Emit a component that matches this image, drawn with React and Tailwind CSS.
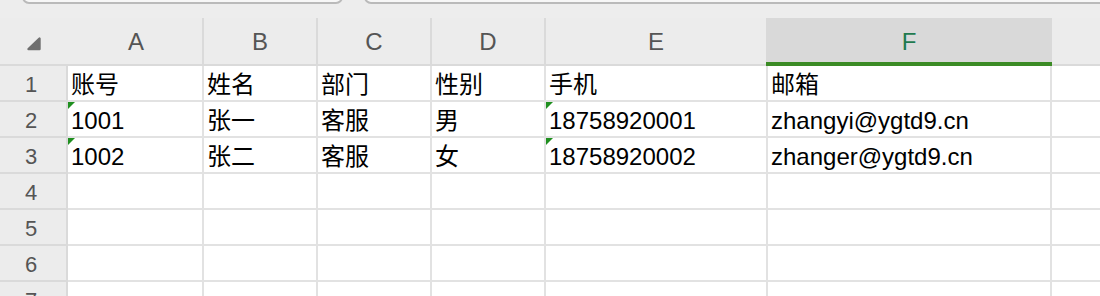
import React from "react";

const rows = [
  { n: "1", c: ["账号", "姓名", "部门", "性别", "手机", "邮箱"], f: false },
  { n: "2", c: ["1001", "张一", "客服", "男", "18758920001", "zhangyi@ygtd9.cn"], f: true },
  { n: "3", c: ["1002", "张二", "客服", "女", "18758920002", "zhanger@ygtd9.cn"], f: true },
  { n: "4", c: ["", "", "", "", "", ""], f: false },
  { n: "5", c: ["", "", "", "", "", ""], f: false },
  { n: "6", c: ["", "", "", "", "", ""], f: false },
  { n: "7", c: ["", "", "", "", "", ""], f: false },
];

const widths = ["w-[136px]", "w-[114px]", "w-[114px]", "w-[114px]", "w-[222px]", "w-[284px]"];

function Flag() {
  return (
    <span className="absolute left-0 top-0 w-0 h-0 border-t-[7px] border-r-[7px] border-t-[#1f8f1f] border-r-transparent" />
  );
}

export default function App() {
  return (
    <div className="w-[1100px] h-[296px] overflow-hidden bg-[#ededed] font-['Liberation_Sans','Noto_Sans_CJK_SC',sans-serif]">
      {/* top toolbar remnants */}
      <div className="h-[18px] flex items-start pl-[22px] gap-[21px] overflow-hidden">
        <div className="w-[321px] h-[14px] -mt-[10px] shrink-0 border-2 border-[#bababa] rounded-[7px] bg-[#f7f7f7]" />
        <div className="w-[760px] h-[14px] -mt-[10px] shrink-0 border-2 border-[#bababa] rounded-[7px] bg-[#f7f7f7]" />
      </div>

      {/* column header */}
      <div className="flex h-[48px] bg-[#ececec] text-[24px] text-[#555555]">
        <div className="w-[68px] h-[48px] border-b-2 border-[#dadada] flex items-start pl-[26px] pt-[18px]">
          <svg width="16" height="15" viewBox="0 0 16 15">
            <path d="M2.5 13 L13.5 2.5 L13.5 13 Z" fill="#6f6f6f" stroke="#6f6f6f" strokeWidth="2.4" strokeLinejoin="round" />
          </svg>
        </div>
        <div className="w-[136px] h-[48px] border-r-2 border-b-2 border-[#dadada] flex items-center justify-center pl-[2px] pt-[1px]">A</div>
        <div className="w-[114px] h-[48px] border-r-2 border-b-2 border-[#dadada] flex items-center justify-center pt-[1px]">B</div>
        <div className="w-[114px] h-[48px] border-r-2 border-b-2 border-[#dadada] flex items-center justify-center pt-[1px]">C</div>
        <div className="w-[114px] h-[48px] border-r-2 border-b-2 border-[#dadada] flex items-center justify-center pt-[1px]">D</div>
        <div className="w-[220px] h-[48px] border-b-2 border-[#dadada] flex items-center justify-center pt-[1px]">E</div>
        <div className="w-[286px] h-[48px] bg-[#d9d9d9] border-b-4 border-[#3b8b25] flex items-center justify-center pt-[3px] text-[#1f7a4f]">F</div>
        <div className="flex-1 h-[48px] border-b-2 border-[#dadada]" />
      </div>

      {/* body rows */}
      {rows.map((r) => (
        <div key={r.n} className="flex h-[36px]">
          <div className="w-[68px] h-[36px] bg-[#ececec] border-r-2 border-b-2 border-[#dadada] flex justify-center pr-[4px] pt-[4px] leading-[30px] text-[22px] text-[#555555]">
            {r.n}
          </div>
          {r.c.map((t, i) => (
            <div
              key={i}
              className={`${widths[i]} relative h-[36px] bg-white border-r-2 border-b-2 border-[#e2e2e2] pl-[3px] pt-[4px] leading-[30px] text-[24px] text-black whitespace-nowrap overflow-hidden`}
            >
              {r.f && (i === 0 || i === 4) && <Flag />}
              {t}
            </div>
          ))}
          <div className="flex-1 h-[36px] bg-white border-b-2 border-[#e2e2e2]" />
        </div>
      ))}
    </div>
  );
}
